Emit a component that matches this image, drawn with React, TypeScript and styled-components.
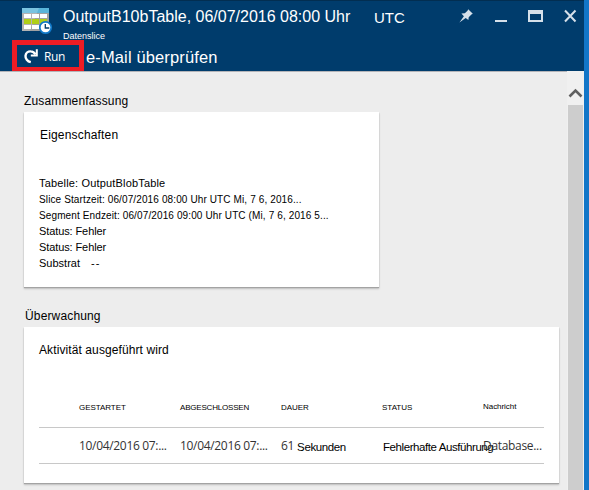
import React from 'react';
import styled, { createGlobalStyle } from 'styled-components';

const GlobalStyle = createGlobalStyle`
  * { box-sizing: border-box; }
  body { margin: 0; background: #ededed; overflow: hidden; }
`;

const Window = styled.div`
  display: flex;
  flex-direction: column;
  width: 589px;
  height: 490px;
  overflow: hidden;
  border-right: 5px solid #1276c8;
  background: #ededed;
  color: #000;
  font-family: 'Liberation Sans', Arial, sans-serif;
`;

const Header = styled.header`
  flex: none;
  display: flex;
  flex-direction: column;
  height: 71px;
  border-top: 1px solid #022e51;
  background: #003c6c;
  color: #fff;
`;

const TitleBar = styled.div`
  display: flex;
  height: 39px;
`;

const TableLogo = styled.svg`
  flex: none;
  width: 31px;
  height: 27px;
  margin: 7px 0 0 22px;
`;

const Titles = styled.div`
  flex: none;
  width: 321px;
  padding: 6px 0 0 10px;
`;

const Label = styled.div<{ $size: number; $line: number; $spacing?: number }>`
  font-size: ${(p) => p.$size}px;
  line-height: ${(p) => p.$line}px;
  letter-spacing: ${(p) => p.$spacing ?? 0}px;
  white-space: pre;
`;

const Subtitle = styled(Label)`
  padding-top: 1px;
`;

const Zone = styled(Label)`
  flex: none;
  width: 85px;
  padding-top: 7px;
`;

const WindowButtons = styled.div`
  flex: none;
  display: flex;
  padding-top: 7px;

  svg { display: block; width: 120px; height: 18px; }
`;

const CommandBar = styled.div`
  display: flex;
  height: 31px;
  padding-left: 12px;
`;

const RunButton = styled.button`
  flex: none;
  display: flex;
  align-items: center;
  gap: 6px;
  width: 72px;
  height: 32px;
  padding: 0 0 0 7px;
  border: 5px solid #ed1c24;
  background: #003c6c;
  color: #fff;
  font: 12px/20px 'Open Sans', sans-serif;
  letter-spacing: -0.4px;

  svg { width: 14px; height: 16px; }
`;

const RunText = styled.span`
  padding-top: 2px;
`;

const Command = styled(Label)`
  padding: 7px 0 0 2px;
`;

const Main = styled.div`
  flex: 1;
  display: flex;
  min-height: 0;
`;

const Content = styled.main`
  width: 567px;
  border-top: 1px solid #b4b4b8;
  padding: 20px 0 0 24px;
`;

const ScrollTrack = styled.div`
  display: flex;
  flex-direction: column;
  width: 17px;
  padding: 0 1px;
  background: #f0f0f0;

  svg { display: block; width: 15px; height: 34px; }
`;

const ScrollThumb = styled.div`
  flex: 1;
  background: #cdcdcd;
`;

const Card = styled.section<{ $width: number; $height: number }>`
  width: ${(p) => p.$width}px;
  height: ${(p) => p.$height}px;
  padding-left: 15px;
  background: #fff;
  box-shadow: 0 1px 1px #a3a3a3, 0 2px 2px rgba(0, 0, 0, 0.18);
`;

const SectionTitle = styled(Label)<{ $top: number; $bottom: number; $indent: number }>`
  padding: ${(p) => p.$top}px 0 ${(p) => p.$bottom}px ${(p) => p.$indent}px;
`;

const CardTitle = styled(Label)<{ $indent: number }>`
  padding: 15px 0 0 ${(p) => p.$indent}px;
`;

const Properties = styled.div`
  padding-top: 32px;
`;

const Property = styled(Label)<{ $shift: number }>`
  height: 16px;
  padding-top: ${(p) => p.$shift}px;
`;

const Substrate = styled.div`
  display: flex;
  gap: 11px;
`;

const Row = styled.div<{ $height: number }>`
  display: grid;
  grid-template-columns: 101px 101px 101px 101px 1fr;
  align-items: start;
  width: 505px;
  height: ${(p) => p.$height}px;
  padding-left: 40px;
  border-bottom: 1px solid #c8c8c8;
`;

const HeadCell = styled(Label)<{ $top: number }>`
  padding-top: ${(p) => p.$top}px;
`;

const Cell = styled.div`
  display: flex;
  padding-top: 10px;
  color: #333;
  font: 12px/16px 'Open Sans', sans-serif;
  letter-spacing: -0.32px;
  white-space: pre;
`;

const PlainText = styled(Label)<{ $indent: number }>`
  padding: 1px 0 0 ${(p) => p.$indent}px;
  color: #000;
  font-family: 'Liberation Sans', Arial, sans-serif;
`;

const properties = [
  { text: 'Tabelle: OutputBlobTable', size: 11, spacing: 0.17, shift: 0 },
  { text: 'Slice Startzeit: 06/07/2016 08:00 Uhr UTC Mi, 7 6, 2016...', size: 10, spacing: 0.12, shift: 1 },
  { text: 'Segment Endzeit: 06/07/2016 09:00 Uhr UTC (Mi, 7 6, 2016 5...', size: 10, spacing: 0.12, shift: 1 },
  { text: 'Status: Fehler', size: 11, spacing: -0.1, shift: 0 },
  { text: 'Status: Fehler', size: 11, spacing: -0.1, shift: 0 },
];

const columns = [
  { text: 'GESTARTET', spacing: -0.05 },
  { text: 'ABGESCHLOSSEN', spacing: -0.2 },
  { text: 'DAUER', spacing: -0.05 },
  { text: 'STATUS', spacing: 0 },
  { text: 'Nachricht', spacing: -0.05 },
];

export default function App() {
  return (
    <>
      <GlobalStyle />
      <Window>
        <Header>
          <TitleBar>
            <TableLogo viewBox="0 0 31 27">
              <rect width="27" height="23" fill="#a0a1a2" />
              <rect width="27" height="5" fill="#59b4d9" />
              <path d="M0 0H17L8 23H0Z" fill="#fff" opacity=".2" />
              <path d="M2 6h7v4H2zM10 6h7v4h-7zM18 6h7v4h-7zM2 17h7v4H2zM10 17h7v4h-7z" fill="#fff" />
              <path d="M2 11h7v5H2zM10 11h7v5h-7zM18 11h7v5h-7z" fill="#b0cf18" />
              <circle cx="23.5" cy="19.5" r="5.7" fill="#fff" stroke="#1079c9" strokeWidth="1.7" />
              <path d="M23.3 16v4h4" fill="none" stroke="#003c6c" strokeWidth="1.3" />
            </TableLogo>
            <Titles>
              <Label $size={16} $line={20}>OutputB10bTable, 06/07/2016 08:00 Uhr</Label>
              <Subtitle $size={9} $line={16}>Datenslice</Subtitle>
            </Titles>
            <Zone $size={15} $line={20}>UTC</Zone>
            <WindowButtons>
              <svg viewBox="0 0 120 18" fill="#d5e0ea">
                <path d="M9.2 1.2 13.8 5.8 12.4 6.4 9.7 9.3 9.4 12 6.7 10 0.4 14.6 4.9 8.3 2.4 5.4 5.8 5.2 8.5 2.7Z" />
                <path d="M36 12h12v2H36z" />
                <path d="M69 2h15v12H69zM71 6v6h11v-6z" fillRule="evenodd" />
                <path d="m106 2.5 10.5 11M116.5 2.5 106 13.5" fill="none" stroke="#d5e0ea" strokeWidth="2" />
              </svg>
            </WindowButtons>
          </TitleBar>
          <CommandBar>
            <RunButton>
              <svg viewBox="0 0 14 16" fill="none" stroke="#fff">
                <path d="M6.8 14.2C3.4 13.4 1.3 10.4 1.5 7.8 1.8 4.8 4.2 3.2 6.8 3.4 8.8 3.5 10.3 4.5 11.5 6.4" strokeWidth="2.4" />
                <path d="M12.8 1.2V7.6H6.8" strokeWidth="2" />
              </svg>
              <RunText>Run</RunText>
            </RunButton>
            <Command $size={16.5} $line={21} $spacing={0.13}>e-Mail überprüfen</Command>
          </CommandBar>
        </Header>
        <Main>
          <Content>
            <SectionTitle $size={12} $line={18} $spacing={0.15} $top={0} $bottom={2} $indent={0}>Zusammenfassung</SectionTitle>
            <Card $width={355} $height={175}>
              <CardTitle $size={12} $line={16} $spacing={0.17} $indent={1}>Eigenschaften</CardTitle>
              <Properties>
                {properties.map((p, i) => (
                  <Property key={i} $size={p.size} $line={16} $spacing={p.spacing} $shift={p.shift}>{p.text}</Property>
                ))}
                <Substrate>
                  <Label $size={11} $line={16}>Substrat</Label>
                  <Label $size={11} $line={16} $spacing={1}>--</Label>
                </Substrate>
              </Properties>
            </Card>
            <SectionTitle $size={12} $line={20} $spacing={0.15} $top={19} $bottom={1} $indent={1}>Überwachung</SectionTitle>
            <Card $width={535} $height={156}>
              <CardTitle $size={12} $line={16} $spacing={0.1} $indent={0}>Aktivität ausgeführt wird</CardTitle>
              <Row $height={70}>
                {columns.map((c, i) => (
                  <HeadCell key={c.text} $size={8} $line={12} $spacing={c.spacing} $top={i === 4 ? 43 : 44}>{c.text}</HeadCell>
                ))}
              </Row>
              <Row $height={36}>
                <Cell>10/04/2016 07:...</Cell>
                <Cell>10/04/2016 07:...</Cell>
                <Cell>61<PlainText $size={11.5} $line={16} $spacing={-0.38} $indent={3}>Sekunden</PlainText></Cell>
                <Cell><PlainText $size={11.5} $line={16} $spacing={-0.42} $indent={1}>Fehlerhafte Ausführung</PlainText></Cell>
                <Cell>Database...</Cell>
              </Row>
            </Card>
          </Content>
          <ScrollTrack>
            <svg viewBox="0 0 15 34">
              <path d="m1.5 25.5 6-6 6 6" fill="none" stroke="#606060" strokeWidth="2.6" />
            </svg>
            <ScrollThumb />
          </ScrollTrack>
        </Main>
      </Window>
    </>
  );
}
